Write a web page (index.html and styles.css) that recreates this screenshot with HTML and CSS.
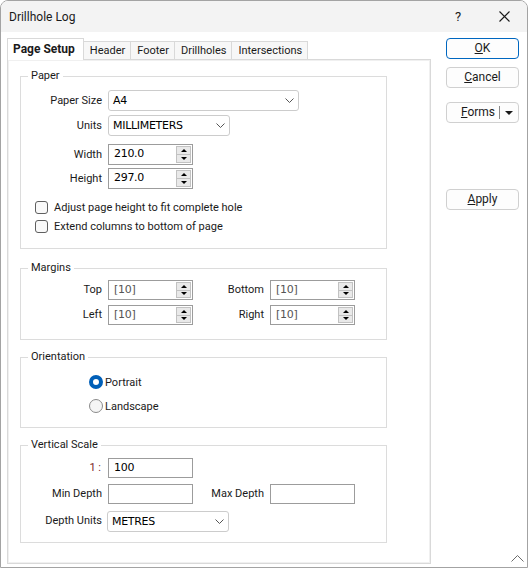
FILE: index.html
```html
<!DOCTYPE html>
<html lang="en">
<head>
  <meta charset="UTF-8">
  <title>Drillhole Log</title>
  <link rel="stylesheet" href="styles.css">
</head>
<body>

<div class="window">
  <div class="titlebar">
    <span class="title">Drillhole Log</span>
    <span class="caption-btn">?</span>
    <span class="caption-btn">
      <svg width="11" height="11" viewBox="0 0 11 11"><path d="M0.5 0.5L10.5 10.5M10.5 0.5L0.5 10.5" stroke="#1a1a1a" stroke-width="1.1" fill="none"/></svg>
    </span>
  </div>

  <div class="main">
    <div class="tabs-area">
      <div class="tabs">
        <div class="tab active">Page Setup</div>
        <div class="tab">Header</div>
        <div class="tab">Footer</div>
        <div class="tab">Drillholes</div>
        <div class="tab">Intersections</div>
      </div>

      <div class="panel">
        <!-- Paper -->
        <fieldset class="group paper">
          <legend>Paper</legend>
          <div class="rows paper-rows">
            <label>Paper Size</label>
            <div class="combo size-combo"><span>A4</span><svg width="9" height="5" viewBox="0 0 9 5"><path d="M0.5 0.5L4.5 4.5L8.5 0.5" stroke="#555" fill="none"/></svg></div>
            <label>Units</label>
            <div class="combo units-combo"><span>MILLIMETERS</span><svg width="9" height="5" viewBox="0 0 9 5"><path d="M0.5 0.5L4.5 4.5L8.5 0.5" stroke="#555" fill="none"/></svg></div>
            <label>Width</label>
            <div class="spin"><span class="value">210.0</span><span class="arrows"><i class="up"></i><i class="down"></i></span></div>
            <label>Height</label>
            <div class="spin"><span class="value">297.0</span><span class="arrows"><i class="up"></i><i class="down"></i></span></div>
          </div>
          <div class="checks">
            <div class="check"><span class="box"></span>Adjust page height to fit complete hole</div>
            <div class="check"><span class="box"></span>Extend columns to bottom of page</div>
          </div>
        </fieldset>

        <!-- Margins -->
        <fieldset class="group margins">
          <legend>Margins</legend>
          <div class="rows margin-rows">
            <label>Top</label>
            <div class="spin"><span class="value muted">[10]</span><span class="arrows"><i class="up"></i><i class="down"></i></span></div>
            <label>Bottom</label>
            <div class="spin"><span class="value muted">[10]</span><span class="arrows"><i class="up"></i><i class="down"></i></span></div>
            <label>Left</label>
            <div class="spin"><span class="value muted">[10]</span><span class="arrows"><i class="up"></i><i class="down"></i></span></div>
            <label>Right</label>
            <div class="spin"><span class="value muted">[10]</span><span class="arrows"><i class="up"></i><i class="down"></i></span></div>
          </div>
        </fieldset>

        <!-- Orientation -->
        <fieldset class="group orientation">
          <legend>Orientation</legend>
          <div class="radios">
            <div class="radio"><span class="dot checked"></span>Portrait</div>
            <div class="radio"><span class="dot"></span>Landscape</div>
          </div>
        </fieldset>

        <!-- Vertical Scale -->
        <fieldset class="group scale">
          <legend>Vertical Scale</legend>
          <div class="rows scale-rows">
            <label class="ratio">1 :</label>
            <div class="field"><span class="value">100</span></div>
            <span></span><span></span>
            <label>Min Depth</label>
            <div class="field"></div>
            <label>Max Depth</label>
            <div class="field"></div>
            <label>Depth Units</label>
            <div class="combo depth-combo"><span>METRES</span><svg width="9" height="5" viewBox="0 0 9 5"><path d="M0.5 0.5L4.5 4.5L8.5 0.5" stroke="#555" fill="none"/></svg></div>
          </div>
        </fieldset>
      </div>
    </div>

    <div class="side">
      <div class="btn default"><u>O</u>K</div>
      <div class="btn cancel"><u>C</u>ancel</div>
      <div class="btn forms"><span class="forms-label"><u>F</u>orms</span><span class="sep"></span><span class="drop"></span></div>
      <div class="btn apply"><u>A</u>pply</div>
    </div>
  </div>

  <svg class="grip" width="13" height="7" viewBox="0 0 13 7"><path d="M0.5 6.5L6.5 0.5L12.5 6.5" stroke="#6b6b6b" fill="none"/></svg>
</div>

</body>
</html>
```

FILE: styles.css
```css
* {
  box-sizing: border-box;
}

body {
  margin: 0;
  background: #ffffff;
  font-family: Roboto, "Noto Sans", sans-serif;
  font-size: 11px;
  color: #1a1a1a;
}

.window {
  position: relative;
  width: 528px;
  height: 568px;
  border: 1px solid #a3a3a3;
  border-radius: 8px 8px 0 0;
  background: #ffffff;
  overflow: hidden;
}

/* Title bar */
.titlebar {
  display: flex;
  align-items: center;
  height: 31px;
  padding-left: 8px;
  background: #f3f3f3;
  font-size: 12px;
}

.titlebar .title {
  flex: 1;
}

.caption-btn {
  display: flex;
  justify-content: center;
  align-items: center;
  width: 46px;
  height: 31px;
  font-size: 13px;
}

/* Main area */
.main {
  display: flex;
  padding: 6px 0 0 6px;
}

.tabs-area {
  width: 424px;
}

.tabs {
  display: flex;
  align-items: flex-end;
  height: 21px;
}

.tab {
  height: 18px;
  padding: 0 5px 0 6px;
  line-height: 17px;
  border: 1px solid #d9d9d9;
  border-left: none;
  border-bottom: none;
  background: #f7f7f7;
}

.tab.active {
  position: relative;
  z-index: 1;
  height: 22px;
  margin-bottom: -1px;
  padding: 0 8px 0 5px;
  line-height: 20px;
  border-left: 1px solid #d9d9d9;
  background: #ffffff;
  font-size: 12px;
  font-weight: bold;
}

.panel {
  height: 505px;
  padding: 9px 0 0 12px;
  border: 1px solid #d9d9d9;
  box-shadow: inset 0 0 0 1px #f0f0f0;
}

/* Group boxes */
.group {
  width: 367px;
  margin: 0;
  padding: 0;
  border: 1px solid #dcdcdc;
}

.group legend {
  margin-left: 7px;
  padding: 0 3px;
  line-height: 14px;
}

.rows {
  display: grid;
  grid-template-columns: 81px 85px 65px 85px;
  column-gap: 6px;
  align-items: start;
}

.rows label {
  text-align: right;
  line-height: 20px;
  white-space: nowrap;
}

.paper {
  padding: 7px 0 12px;
}

.paper-rows {
  grid-template-rows: 25px 29px 24px 21px;
}

.paper-rows label {
  grid-column: 1;
  line-height: 21px;
}

.paper-rows .spin {
  grid-column: 2;
  height: 21px;
}

.size-combo {
  grid-column: 2 / 5;
  width: 191px;
}

.units-combo {
  grid-column: 2 / 4;
  width: 122px;
}

.checks {
  margin-top: 9px;
  padding-left: 14px;
}

.check {
  display: flex;
  align-items: center;
  height: 19px;
}

.check .box {
  width: 13px;
  height: 13px;
  margin-right: 6px;
  border: 1px solid #5f5f5f;
  border-radius: 3px;
  background: #f9f9f9;
}

.margins {
  margin-top: 12px;
  padding: 5px 0 14px;
}

.margin-rows {
  grid-template-rows: 25px 20px;
}

.orientation {
  margin-top: 10px;
  padding: 8px 0 11px;
}

.radios {
  padding-left: 68px;
}

.radio {
  display: flex;
  align-items: center;
  height: 20px;
}

.radio + .radio {
  margin-top: 4px;
}

.radio .dot {
  width: 14px;
  height: 14px;
  margin-right: 2px;
  border: 1px solid #8a8a8a;
  border-radius: 50%;
  background: #f5f5f5;
}

.radio .dot.checked {
  border: 4px solid #005fb8;
  background: #ffffff;
}

.scale {
  margin-top: 10px;
  padding: 6px 0 10px;
}

.scale-rows {
  grid-template-rows: 26px 27px 21px;
}

.scale-rows .ratio {
  color: #7a1f1f;
  padding-right: 1px;
}

.depth-combo {
  grid-column: 2 / 4;
  width: 122px;
  margin-left: -1px;
}

/* Inputs */
.field,
.spin {
  display: flex;
  height: 20px;
  border: 1px solid #9c9c9c;
  background: #ffffff;
  font-family: "DejaVu Sans", sans-serif;
  font-size: 11px;
  letter-spacing: -0.3px;
}

.value {
  flex: 1;
  padding-left: 5px;
  line-height: 18px;
  color: #000000;
}

.value.muted {
  color: #555555;
}

.arrows {
  display: flex;
  flex-direction: column;
  width: 15px;
  margin: 1px 1px 1px 0;
  border: 1px solid #c2c2c2;
  background: #e9e9e9;
}

.arrows i {
  flex: 1;
  display: flex;
  justify-content: center;
  align-items: center;
}

.arrows i + i {
  border-top: 1px solid #c2c2c2;
}

.arrows .up::before {
  content: "";
  border: 3px solid transparent;
  border-top: none;
  border-bottom: 3px solid #000;
}

.arrows .down::before {
  content: "";
  border: 3px solid transparent;
  border-bottom: none;
  border-top: 3px solid #000;
}

.combo {
  display: flex;
  justify-content: space-between;
  align-items: center;
  height: 21px;
  padding: 0 4px 0 4px;
  border: 1px solid #cccccc;
  border-radius: 3px;
  background: #ffffff;
  font-family: "DejaVu Sans", sans-serif;
  font-size: 11px;
  letter-spacing: -0.3px;
  color: #000000;
}

/* Side buttons */
.side {
  display: flex;
  flex-direction: column;
  width: 73px;
  margin-left: 15px;
  font-size: 12px;
}

.btn {
  height: 21px;
  line-height: 19px;
  text-align: center;
  border: 1px solid #d0d0d0;
  border-radius: 4px;
  background: #fdfdfd;
}

.btn.default {
  border-color: #0067c0;
}

.btn.cancel {
  margin-top: 8px;
}

.btn.forms {
  display: flex;
  align-items: center;
  margin-top: 14px;
}

.forms-label {
  flex: 1;
  padding-left: 10px;
}

.sep {
  width: 1px;
  height: 13px;
  background: #8a8a8a;
}

.drop {
  margin: 0 5px 0 5px;
  border: 4px solid transparent;
  border-bottom: none;
  border-top: 4px solid #1a1a1a;
}

.btn.apply {
  margin-top: 66px;
}

.grip {
  position: absolute;
  right: 3px;
  bottom: 5px;
}
```
